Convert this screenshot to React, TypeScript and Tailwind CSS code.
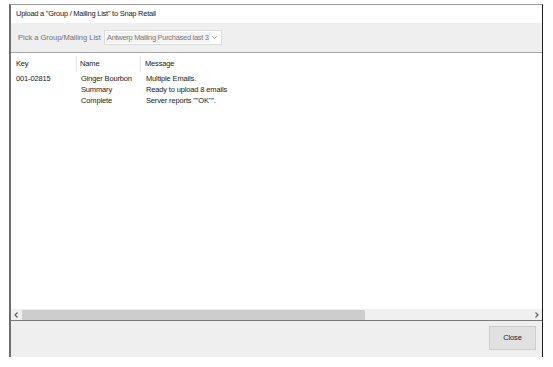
import React from "react";

const rows = [
  { key: "001-02815", name: "Ginger Bourbon", message: "Multiple Emails." },
  { key: "", name: "Summary", message: "Ready to upload 8 emails" },
  { key: "", name: "Complete", message: 'Server reports ""OK"".' },
];

export default function App() {
  return (
    <div className="w-[553px] h-[367px] bg-white pt-[4px] pl-[9px] text-[7.5px] tracking-[-0.15px] text-[#1a1a1a] [font-family:'Liberation_Sans',Arial,sans-serif]">
      <div className="w-[534px] h-[353px] flex flex-col border-t border-t-[#9a9a9a] border-l-2 border-l-[#6e6e6e] border-r border-r-[#1e1e1e]">
        <div className="h-[18px] bg-white flex items-center pl-[5px] tracking-[-0.25px]">
          Upload a "Group / Mailing List" to Snap Retail
        </div>

        <div className="h-[30px] bg-[#efefef] border-b border-b-[#a6a6a6] flex items-center pl-[7px] gap-[3px]">
          <span className="text-[#707070] whitespace-nowrap tracking-[0px]">Pick a Group/Mailing List</span>
          <div className="w-[118px] h-[15px] bg-white border border-[#dcdcdc] flex items-center justify-between pl-[1px] pr-[3px] text-[#7a7a7a] whitespace-nowrap overflow-hidden">
            <span className="bg-[#f3f3f3] px-[1px] tracking-[-0.3px]">Antwerp Mailing Purchased last 3</span>
            <svg width="7" height="5" viewBox="0 0 7 5" className="shrink-0">
              <path d="M1 1 L3.5 3.5 L6 1" fill="none" stroke="#b0b0b0" strokeWidth="1" />
            </svg>
          </div>
        </div>

        <div className="flex-1 bg-white">
          <div className="flex h-[16px] mt-[3px]">
            <div className="w-[66px] pl-[5px] border-r border-r-[#e5e5e5] flex items-center">Key</div>
            <div className="w-[64px] pl-[3px] border-r border-r-[#e5e5e5] flex items-center">Name</div>
            <div className="pl-[4px] flex items-center">Message</div>
          </div>
          <div className="mt-[1px]">
            {rows.map((r, i) => (
              <div key={i} className="flex h-[11px] items-center whitespace-nowrap">
                <div className="w-[67px] pl-[5px]">{r.key}</div>
                <div className="w-[64px] pl-[3px]">{r.name}</div>
                <div className="pl-[4px]">{r.message}</div>
              </div>
            ))}
          </div>
        </div>

        <div className="h-[11px] bg-[#f0f0f0] flex items-center">
          <div className="w-[11px] flex justify-center">
            <svg width="5" height="6" viewBox="0 0 5 6">
              <path d="M3.5 0.5 L1 3 L3.5 5.5" fill="none" stroke="#606060" strokeWidth="1.2" />
            </svg>
          </div>
          <div className="w-[343px] h-[10px] bg-[#cdcdcd]" />
          <div className="flex-1" />
          <div className="w-[11px] flex justify-center">
            <svg width="5" height="6" viewBox="0 0 5 6">
              <path d="M1.5 0.5 L4 3 L1.5 5.5" fill="none" stroke="#606060" strokeWidth="1.2" />
            </svg>
          </div>
        </div>
        <div className="h-px bg-[#7a7a7a]" />

        <div className="h-[36px] bg-[#efefef] flex items-start justify-end pr-[6px] pt-[5px]">
          <button
            type="button"
            className="w-[47px] h-[24px] bg-[#e1e1e1] border border-[#cccccc] text-[#1a1a1a]"
          >
            Close
          </button>
        </div>
      </div>
    </div>
  );
}
